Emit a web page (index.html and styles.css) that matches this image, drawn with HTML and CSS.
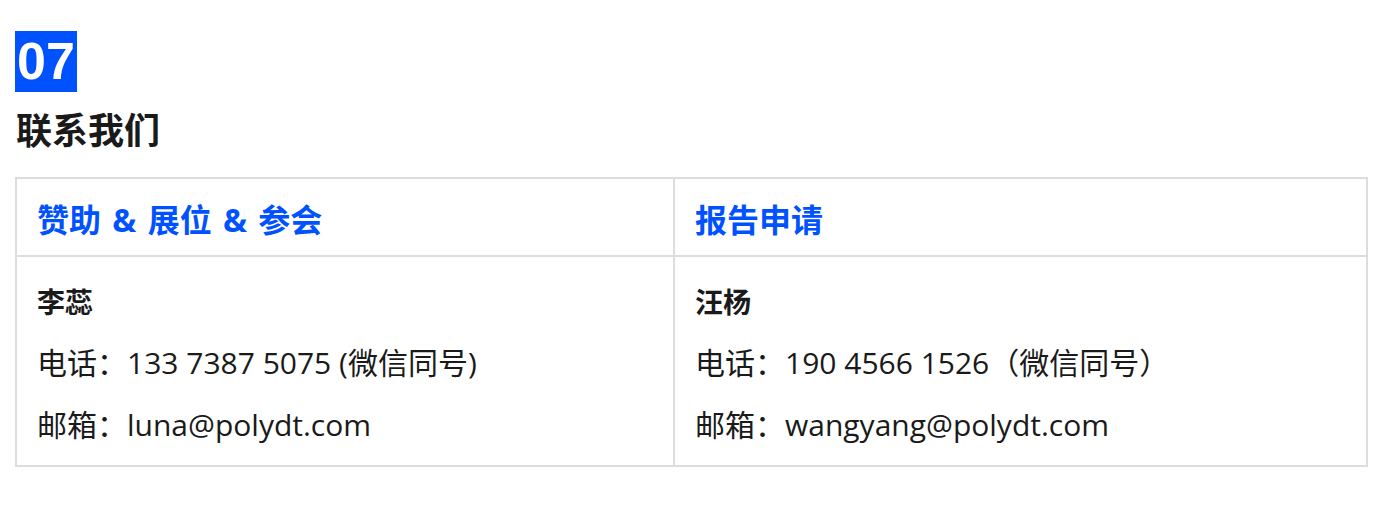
FILE: index.html
```html
<!DOCTYPE html>
<html lang="zh-CN">
<head>
    <meta charset="UTF-8">
    <meta name="viewport" content="width=device-width, initial-scale=1.0">
    <title>联系我们</title>
    <link rel="stylesheet" href="styles.css">
</head>
<body>
    <div class="section">
        <div class="section-num">07</div>
        <h2 class="section-title">联系我们</h2>

        <table class="contact-table">
            <colgroup>
                <col class="col-left">
                <col>
            </colgroup>
            <thead>
                <tr>
                    <th>赞助 &amp; 展位 &amp; 参会</th>
                    <th>报告申请</th>
                </tr>
            </thead>
            <tbody>
                <tr>
                    <td>
                        <p class="name">李蕊</p>
                        <p>电话：133 7387 5075 (微信同号)</p>
                        <p>邮箱：luna@polydt.com</p>
                    </td>
                    <td>
                        <p class="name">汪杨</p>
                        <p>电话：190 4566 1526（微信同号）</p>
                        <p>邮箱：wangyang@polydt.com</p>
                    </td>
                </tr>
            </tbody>
        </table>
    </div>
</body>
</html>
```

FILE: styles.css
```css
body {
    margin: 0;
    background-color: #fff;
    color: #1a1a1a;
    font-family: "Open Sans", "Noto Sans CJK SC", sans-serif;
}
.section {
    padding: 31px 18px 0 15px;
}
.section-num {
    display: inline-block;
    background-color: #0052ff;
    color: #fff;
    font-family: "Liberation Sans", Arial, sans-serif;
    font-weight: bold;
    font-size: 52px;
    line-height: 61px;
    padding: 0 2px;
}
.section-title {
    margin: 15px 0 27px;
    padding-left: 1px;
    font-family: "Noto Sans CJK SC", sans-serif;
    font-size: 36px;
    line-height: 43px;
    font-weight: bold;
}
.contact-table {
    width: 100%;
    table-layout: fixed;
    border-collapse: collapse;
}
.col-left {
    width: 658px;
}
.contact-table th,
.contact-table td {
    border: 2px solid #ddd;
    text-align: left;
    vertical-align: top;
}
.contact-table th {
    padding: 21px 20px 15px;
    color: #0052ff;
    font-family: "Open Sans", "Noto Sans CJK SC", sans-serif;
    font-size: 32px;
    line-height: 40px;
    font-weight: bold;
    word-spacing: 3px;
}
.contact-table td {
    padding: 23px 20px 19px;
    font-size: 30px;
}
.contact-table p {
    margin: 0 0 20px;
    line-height: 42px;
}
.contact-table p:last-child {
    margin-bottom: 0;
}
.contact-table .name {
    font-family: "Noto Sans CJK SC", sans-serif;
    font-size: 28px;
    font-weight: bold;
}
```
